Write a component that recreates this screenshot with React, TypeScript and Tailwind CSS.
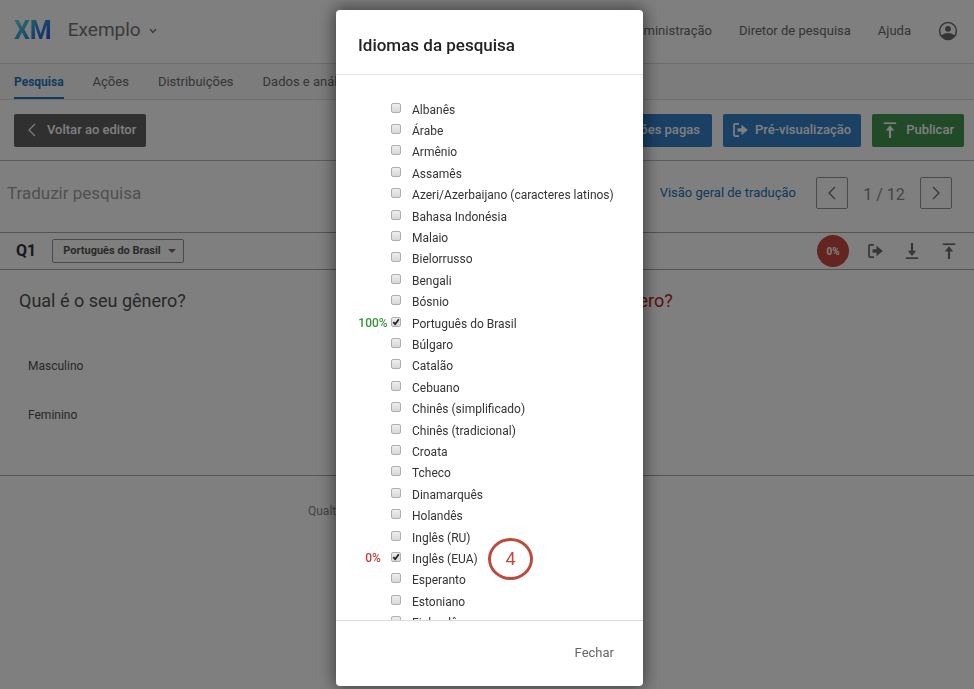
import { useState } from "react";
import type { ReactNode } from "react";

interface Language {
  id: string;
  label: string;
  progress?: number;
  step?: number;
}

const LANGUAGES: Language[] = [
  { id: "sq", label: "Albanês" },
  { id: "ar", label: "Árabe" },
  { id: "hy", label: "Armênio" },
  { id: "as", label: "Assamês" },
  { id: "az", label: "Azeri/Azerbaijano (caracteres latinos)" },
  { id: "id", label: "Bahasa Indonésia" },
  { id: "ms", label: "Malaio" },
  { id: "be", label: "Bielorrusso" },
  { id: "bn", label: "Bengali" },
  { id: "bs", label: "Bósnio" },
  { id: "pt-br", label: "Português do Brasil", progress: 100 },
  { id: "bg", label: "Búlgaro" },
  { id: "ca", label: "Catalão" },
  { id: "ceb", label: "Cebuano" },
  { id: "zh-s", label: "Chinês (simplificado)" },
  { id: "zh-t", label: "Chinês (tradicional)" },
  { id: "hr", label: "Croata" },
  { id: "cs", label: "Tcheco" },
  { id: "da", label: "Dinamarquês" },
  { id: "nl", label: "Holandês" },
  { id: "en-gb", label: "Inglês (RU)" },
  { id: "en", label: "Inglês (EUA)", progress: 0, step: 4 },
  { id: "eo", label: "Esperanto" },
  { id: "et", label: "Estoniano" },
  { id: "fi", label: "Finlandês" },
];

function Icon({ children }: { children: ReactNode }) {
  return (
    <svg viewBox="0 0 16 16" className="w-4 h-4" fill="none" stroke="currentColor" strokeWidth="2" aria-hidden="true">
      {children}
    </svg>
  );
}

function ExportIcon() {
  return (
    <Icon>
      <path d="M7 1.8H3.200Q2 1.800 2 3v10q0 1.200 1.200 1.200H7" strokeWidth="1.7" />
      <path d="M5.5 8H11" strokeWidth="3.4" />
      <path d="M9.500 2.800v10.400L15.800 8z" fill="currentColor" stroke="none" />
    </Icon>
  );
}

function UploadIcon() {
  return (
    <Icon>
      <path d="M1.800 1.200h12.400" strokeWidth="1.700" />
      <path d="M8 6v10" strokeWidth="2.200" />
      <path d="M8 3.200L3.800 8.600h8.400z" fill="currentColor" stroke="none" />
    </Icon>
  );
}

function DownloadIcon() {
  return (
    <Icon>
      <path d="M1.800 15.200h12.400" strokeWidth="1.700" />
      <path d="M8 0v10" strokeWidth="2.200" />
      <path d="M8 13L3.800 7.800h8.400z" fill="currentColor" stroke="none" />
    </Icon>
  );
}

function ChevronIcon({ right }: { right?: boolean }) {
  return (
    <Icon>
      <path d={right ? "M5 2l6 6-6 6" : "M11 2L5 8l6 6"} strokeWidth="1.2" />
    </Icon>
  );
}

function Header() {
  return (
    <header className="flex items-center h-16 pl-3.5 pr-4 pb-0.5 border-b border-[#d8d8d8]">
      <span className="text-[25px] leading-8 font-bold bg-linear-to-br from-[#74f0c8] via-[#2c92dc] to-[#3a18d8] bg-clip-text text-transparent">
        XM
      </span>
      <button className="flex items-center gap-2 ml-4 text-[19px] text-[#757575] cursor-pointer">
        Exemplo
        <svg viewBox="0 0 8 8" className="w-2 h-2" fill="none" stroke="currentColor" strokeWidth="1.3" aria-hidden="true">
          <path d="M1 2l3 3.400L7 2" />
        </svg>
      </button>
      <nav className="flex items-center gap-[27px] ml-auto text-[13px] text-[#6a6a6a]">
        <a href="#admin">Administração</a>
        <a href="#diretor">Diretor de pesquisa</a>
        <a href="#ajuda">Ajuda</a>
        <button aria-label="Conta" className="cursor-pointer">
          <svg viewBox="0 0 20 20" className="w-5 h-5" fill="none" stroke="currentColor" strokeWidth="1.5" aria-hidden="true">
            <circle cx="10" cy="10" r="8.4" />
            <circle cx="10" cy="7.8" r="2.9" fill="currentColor" stroke="none" />
            <path d="M3.400 14.600Q5.500 12 10 12t6.600 2.600Q14.300 18.400 10 18.400T3.400 14.600z" fill="currentColor" stroke="none" />
          </svg>
        </button>
      </nav>
    </header>
  );
}

function Tabs() {
  return (
    <nav className="flex gap-[29px] h-9 pl-3.5 text-[13px] leading-9 text-[#6a6a6a] bg-[#f9f9f9] border-b border-[#e0e0e0]">
      <a href="#pesquisa" className="text-xs leading-9 font-bold text-[#1f74c0] border-b-2 border-[#1f74c0]">Pesquisa</a>
      <a href="#acoes">Ações</a>
      <a href="#distribuicoes">Distribuições</a>
      <a href="#dados">Dados e análise</a>
    </nav>
  );
}

function Toolbar() {
  return (
    <div className="flex items-center h-[61px] pl-3.5 pr-2.5 gap-[11px] text-[13px] font-medium text-white border-b border-[#b8b8b8]">
      <button className="flex items-center gap-[7px] h-[33px] pl-2.5 pr-2.5 mr-auto rounded-xs bg-[#606060] cursor-pointer">
        <ChevronIcon />
        Voltar ao editor
      </button>
      <button className="h-[33px] px-3 rounded-xs bg-[#3480c8] cursor-pointer">Traduções pagas</button>
      <button className="flex items-center gap-[7px] h-[33px] pl-[9px] pr-2.5 rounded-xs bg-[#3480c8] cursor-pointer">
        <ExportIcon />
        Pré-visualização
      </button>
      <button className="flex items-center gap-2 h-[33px] px-2.5 rounded-xs bg-[#409450] cursor-pointer">
        <UploadIcon />
        Publicar
      </button>
    </div>
  );
}

function TranslateBar() {
  return (
    <div className="flex items-center h-[72px] pl-[7px] pr-[22px] border-b border-[#a8a8a8]">
      <h1 className="pb-1.5 text-[17px] text-[#a0a0a0]">Traduzir pesquisa</h1>
      <a href="#visao" className="ml-auto mr-5 pb-2 text-[13px] text-[#2070b4]">Visão geral de tradução</a>
      <button aria-label="Anterior" className="grid place-items-center w-8 h-8 mb-2 rounded-xs border border-[#949494] text-[#666] cursor-pointer">
        <ChevronIcon />
      </button>
      <span className="w-[72px] pb-1 text-center text-base text-[#888]">1 / 12</span>
      <button aria-label="Próxima" className="grid place-items-center w-8 h-8 mb-2 rounded-xs border border-[#949494] text-[#666] cursor-pointer">
        <ChevronIcon right />
      </button>
    </div>
  );
}

function Question() {
  return (
    <section>
      <div className="flex items-center h-[37px] pl-4 pr-[17px] text-[#6c6c6c] border-b border-[#a8a8a8]">
        <h2 className="text-base font-bold text-[#333]">Q1</h2>
        <div className="relative ml-4">
          <select
            aria-label="Idioma de base"
            className="block appearance-none w-[132px] h-6 pl-2.5 pr-5 text-[11px] font-bold text-[#555] rounded-xs border border-[#949494] cursor-pointer"
          >
            <option>Português do Brasil</option>
          </select>
          <svg viewBox="0 0 8 4" className="absolute right-2 top-2.5 w-2 h-1 pointer-events-none" fill="currentColor" aria-hidden="true">
            <path d="M0 0h8L4 4z" />
          </svg>
        </div>
        <span className="grid place-items-center w-8 h-8 ml-auto rounded-full bg-[#c84840] text-[10px] font-bold text-white">0%</span>
        <div className="flex gap-[21px] ml-[18px]">
          <button aria-label="Exportar" className="cursor-pointer"><ExportIcon /></button>
          <button aria-label="Baixar" className="cursor-pointer"><DownloadIcon /></button>
          <button aria-label="Enviar" className="cursor-pointer"><UploadIcon /></button>
        </div>
      </div>
      <div className="grid grid-cols-2 h-[206px] pt-[19px] border-b border-[#a8a8a8]">
        <div className="pl-[19px]">
          <p className="text-lg leading-6 text-[#505050]">Qual é o seu gênero?</p>
          <ul className="mt-[45px] ml-[9px] text-xs leading-[17px] text-[#505050]">
            <li>Masculino</li>
            <li className="mt-8">Feminino</li>
          </ul>
        </div>
        <p className="pl-[19px] text-lg leading-6 text-[#b82020]">Qual é o seu gênero?</p>
      </div>
    </section>
  );
}

function LanguageRow({ language }: { language: Language }) {
  const { id, label, progress, step } = language;

  return (
    <li className="relative flex items-center">
      <span className={`w-[30px] text-center text-xs leading-4 font-medium pb-0.5 ${progress === 100 ? "text-[#38943a]" : "text-[#cc3a34]"}`}>
        {progress !== undefined && `${progress}%`}
      </span>
      <span className="relative w-2.5 h-2.5 ml-[3px] mb-1">
        <input
          type="checkbox"
          id={id}
          defaultChecked={progress !== undefined}
          className="peer block appearance-none w-2.5 h-2.5 rounded-xs border border-[#b0b0b0] bg-linear-to-b from-[#eee] to-[#d8d8d8] cursor-pointer"
        />
        <svg viewBox="0 0 10 10" className="hidden peer-checked:block absolute inset-0 w-2.5 h-2.5 pointer-events-none" fill="none" stroke="#222" strokeWidth="1.8" aria-hidden="true">
          <path d="M2.300 5.200L4.200 7.200L7.800 2.200" />
        </svg>
      </span>
      <label htmlFor={id} className="ml-[11px] text-xs leading-4 text-[#333] cursor-pointer">{label}</label>
      {step && (
        <span className="absolute left-[130px] top-1/2 -translate-y-1/2 grid place-items-center w-[45px] h-[42px] rounded-[50%] border-3 border-[#bd4a3a] text-lg text-[#bd4a3a]">
          {step}
        </span>
      )}
    </li>
  );
}

function LanguageDialog({ onClose }: { onClose: () => void }) {
  return (
    <div className="fixed inset-0 z-50 flex justify-center pt-2.5 pb-[3px] pl-[5px] bg-black/50">
      <div
        role="dialog"
        aria-labelledby="dialog-title"
        className="flex flex-col w-[307px] rounded-sm bg-white shadow-[0_0_16px_2px_rgba(0,0,0,0.5)]"
      >
        <h2 id="dialog-title" className="h-[65px] pl-[22px] pt-6 text-[17px] leading-[22px] font-medium text-[#222] border-b border-[#e4e4e4]">
          Idiomas da pesquisa
        </h2>
        <div className="flex-1 min-h-0 overflow-y-auto [scrollbar-width:none] pt-6 pl-[22px]">
          <ul className="grid auto-rows-fr h-[535px]">
            {LANGUAGES.map((language) => (
              <LanguageRow key={language.id} language={language} />
            ))}
          </ul>
        </div>
        <div className="flex justify-end items-center h-[66px] pr-[29px] pb-0.5 border-t border-[#ddd]">
          <button onClick={onClose} className="text-[13px] text-[#666] cursor-pointer">Fechar</button>
        </div>
      </div>
    </div>
  );
}

export default function App() {
  const [open, setOpen] = useState(true);

  return (
    <div className="min-h-screen bg-white font-[Roboto,'Liberation_Sans',sans-serif]">
      <Header />
      <Tabs />
      <Toolbar />
      <TranslateBar />
      <Question />
      <footer className="pt-[27px] pl-[308px] text-xs leading-4 text-[#888]">Qualtrics.com</footer>
      {open && <LanguageDialog onClose={() => setOpen(false)} />}
    </div>
  );
}
